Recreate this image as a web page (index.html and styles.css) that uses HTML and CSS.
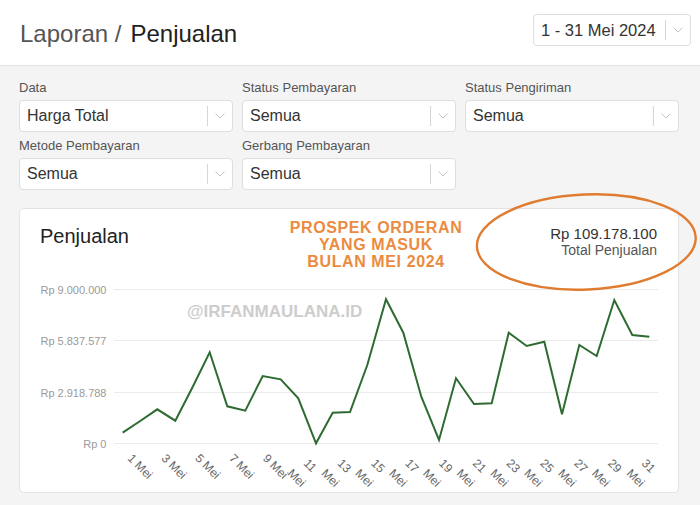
FILE: index.html
```html
<!DOCTYPE html>
<html lang="id">
<head>
<meta charset="utf-8">
<title>Laporan Penjualan</title>
<link rel="stylesheet" href="styles.css">
</head>
<body>
<header class="topbar">
  <h1 class="title"><span class="crumb">Laporan /</span><span class="page">Penjualan</span></h1>
  <div class="select date-select">
    <span class="select-value">1 - 31 Mei 2024</span>
    <span class="select-sep"></span>
    <span class="select-arrow"><svg width="10" height="6" viewBox="0 0 10 6"><path d="M0.5 0.5 L5 5 L9.5 0.5" fill="none" stroke="#c4c4c4" stroke-width="1"/></svg></span>
  </div>
</header>

<main class="content">
  <div class="filters">
    <div class="field">
      <div class="field-label">Data</div>
      <div class="select"><span class="select-value">Harga Total</span><span class="select-sep"></span><span class="select-arrow"><svg width="10" height="6" viewBox="0 0 10 6"><path d="M0.5 0.5 L5 5 L9.5 0.5" fill="none" stroke="#c4c4c4" stroke-width="1"/></svg></span></div>
    </div>
    <div class="field">
      <div class="field-label">Status Pembayaran</div>
      <div class="select"><span class="select-value">Semua</span><span class="select-sep"></span><span class="select-arrow"><svg width="10" height="6" viewBox="0 0 10 6"><path d="M0.5 0.5 L5 5 L9.5 0.5" fill="none" stroke="#c4c4c4" stroke-width="1"/></svg></span></div>
    </div>
    <div class="field">
      <div class="field-label">Status Pengiriman</div>
      <div class="select"><span class="select-value">Semua</span><span class="select-sep"></span><span class="select-arrow"><svg width="10" height="6" viewBox="0 0 10 6"><path d="M0.5 0.5 L5 5 L9.5 0.5" fill="none" stroke="#c4c4c4" stroke-width="1"/></svg></span></div>
    </div>
    <div class="field">
      <div class="field-label">Metode Pembayaran</div>
      <div class="select"><span class="select-value">Semua</span><span class="select-sep"></span><span class="select-arrow"><svg width="10" height="6" viewBox="0 0 10 6"><path d="M0.5 0.5 L5 5 L9.5 0.5" fill="none" stroke="#c4c4c4" stroke-width="1"/></svg></span></div>
    </div>
    <div class="field">
      <div class="field-label">Gerbang Pembayaran</div>
      <div class="select"><span class="select-value">Semua</span><span class="select-sep"></span><span class="select-arrow"><svg width="10" height="6" viewBox="0 0 10 6"><path d="M0.5 0.5 L5 5 L9.5 0.5" fill="none" stroke="#c4c4c4" stroke-width="1"/></svg></span></div>
    </div>
  </div>

  <section class="card">
    <div class="card-head">
      <h2 class="card-title">Penjualan</h2>
      <div class="total">
        <div class="total-amount">Rp 109.178.100</div>
        <div class="total-caption">Total Penjualan</div>
      </div>
    </div>
    <div class="promo">PROSPEK ORDERAN<br>YANG MASUK<br>BULAN MEI 2024</div>
    <div class="watermark">@IRFANMAULANA.ID</div>
    <svg class="chart" width="658" height="222" viewBox="20 270 658 222">
      <g class="grid" stroke="#ebebeb" stroke-width="1">
        <line x1="114" y1="289.5" x2="658" y2="289.5"/>
        <line x1="114" y1="340.5" x2="658" y2="340.5"/>
        <line x1="114" y1="392.5" x2="658" y2="392.5"/>
        <line x1="114" y1="443.5" x2="658" y2="443.5"/>
      </g>
      <g class="ylabels" font-size="11" fill="#9a9a9a" text-anchor="end">
        <text x="106.5" y="293.5">Rp 9.000.000</text>
        <text x="106.5" y="344.5">Rp 5.837.577</text>
        <text x="106.5" y="396.5">Rp 2.918.788</text>
        <text x="106.5" y="447.5">Rp 0</text>
      </g>
      <polyline fill="none" stroke="#2e6b31" stroke-width="2" stroke-linejoin="miter"
        points="122.7,432.7 140.2,421 157.3,409.3 175.3,420.7 192.9,386.5 209.7,352.3 227.3,406.3 245.3,410.7 262.7,376 280.7,379.3 298.3,398.3 316,443.3 332.7,412.7 350,412 367.3,365 386,299.3 403.3,332.7 421.3,396.7 439,440 456,378.3 474,404 491.7,403.3 508.7,332.7 526.7,346 544.3,341.7 562,414.3 579.3,345 596.7,356 614.3,300 632.3,335 649.3,336.7"/>
      <g class="xlabels" font-size="12" fill="#666">
        <text transform="translate(127,459) rotate(45)">1 Mei</text>
        <text transform="translate(160.8,459) rotate(45)">3 Mei</text>
        <text transform="translate(194.6,459) rotate(45)">5 Mei</text>
        <text transform="translate(228.4,459) rotate(45)">7 Mei</text>
        <text transform="translate(262.2,459) rotate(45)">9 Mei</text>
        <text transform="translate(303,464) rotate(45)">11</text>
        <text transform="translate(287,474) rotate(45)">Mei</text>
        <text transform="translate(336.8,464) rotate(45)">13</text>
        <text transform="translate(320.8,474) rotate(45)">Mei</text>
        <text transform="translate(370.6,464) rotate(45)">15</text>
        <text transform="translate(354.6,474) rotate(45)">Mei</text>
        <text transform="translate(404.4,464) rotate(45)">17</text>
        <text transform="translate(388.4,474) rotate(45)">Mei</text>
        <text transform="translate(438.2,464) rotate(45)">19</text>
        <text transform="translate(422.2,474) rotate(45)">Mei</text>
        <text transform="translate(472,464) rotate(45)">21</text>
        <text transform="translate(456,474) rotate(45)">Mei</text>
        <text transform="translate(505.8,464) rotate(45)">23</text>
        <text transform="translate(489.8,474) rotate(45)">Mei</text>
        <text transform="translate(539.6,464) rotate(45)">25</text>
        <text transform="translate(523.6,474) rotate(45)">Mei</text>
        <text transform="translate(573.4,464) rotate(45)">27</text>
        <text transform="translate(557.4,474) rotate(45)">Mei</text>
        <text transform="translate(607.2,464) rotate(45)">29</text>
        <text transform="translate(591.2,474) rotate(45)">Mei</text>
        <text transform="translate(641,464) rotate(45)">31</text>
        <text transform="translate(626,474) rotate(45)">Mei</text>
      </g>
    </svg>
  </section>
</main>

<svg class="annotation" width="700" height="505" viewBox="0 0 700 505">
  <ellipse cx="586.3" cy="242" rx="109.5" ry="47.5" transform="rotate(-2.5 586.3 242)" fill="none" stroke="#e07c31" stroke-width="2.4"/>
</svg>
</body>
</html>
```

FILE: styles.css
```css
* { box-sizing: border-box; }

html, body { margin: 0; padding: 0; }

body {
  position: relative;
  width: 700px;
  height: 505px;
  overflow: hidden;
  background: #f4f4f4;
  font-family: "Liberation Sans", Arial, sans-serif;
  color: #333;
}

.topbar {
  height: 66px;
  background: #fff;
  border-bottom: 1px solid #e3e3e3;
  display: flex;
  justify-content: space-between;
  align-items: flex-start;
  padding: 0 9px 0 20px;
}

.title {
  margin: 20px 0 0;
  font-size: 24px;
  line-height: 28px;
  font-weight: normal;
  display: flex;
}

.crumb { color: #555; }
.page { color: #222; margin-left: 9px; }

.select {
  height: 32px;
  background: #fff;
  border: 1px solid #dedede;
  border-radius: 4px;
  display: flex;
  align-items: center;
}

.date-select {
  width: 158px;
  margin-top: 14px;
}

.select-value {
  flex: 1;
  padding-left: 7px;
  font-size: 16px;
  color: #333;
  white-space: nowrap;
}

.date-select .select-value { font-size: 16.5px; }

.select-sep {
  width: 1px;
  height: 20px;
  background: #d6d6d6;
}

.select-arrow {
  width: 24px;
  display: flex;
  justify-content: center;
  align-items: center;
}

.select-arrow svg { display: block; }

.filters {
  display: grid;
  grid-template-columns: repeat(3, 214px);
  column-gap: 9px;
  row-gap: 6px;
  padding: 14px 0 0 19px;
}

.field-label {
  font-size: 13px;
  line-height: 16px;
  color: #555;
  margin-bottom: 4px;
  white-space: nowrap;
}

.card {
  position: relative;
  margin: 18px 21px 0 19px;
  background: #fff;
  border: 1px solid #e3e3e3;
  border-radius: 5px;
}

.card-head {
  height: 60.5px;
  padding: 15px 21px 0 20px;
  display: flex;
  justify-content: space-between;
  align-items: flex-start;
}

.card-title {
  margin: 0;
  font-size: 20px;
  line-height: 24px;
  font-weight: normal;
  color: #222;
}

.total {
  margin-top: 2px;
  text-align: right;
}

.total-amount {
  font-size: 15px;
  line-height: 16px;
  color: #333;
}

.total-caption {
  font-size: 14px;
  line-height: 16px;
  color: #555;
}

.promo {
  position: absolute;
  top: 10px;
  left: 356px;
  transform: translateX(-50%);
  text-align: center;
  white-space: nowrap;
  font-weight: bold;
  font-size: 16px;
  line-height: 17px;
  letter-spacing: 0.6px;
  color: #eb8b3f;
}

.watermark {
  position: absolute;
  top: 93px;
  left: 167px;
  font-weight: bold;
  font-size: 17px;
  line-height: 20px;
  color: #cdcdcd;
  white-space: nowrap;
}

.chart {
  display: block;
  font-family: "Liberation Sans", Arial, sans-serif;
}

.annotation {
  position: absolute;
  left: 0;
  top: 0;
  pointer-events: none;
}
```
